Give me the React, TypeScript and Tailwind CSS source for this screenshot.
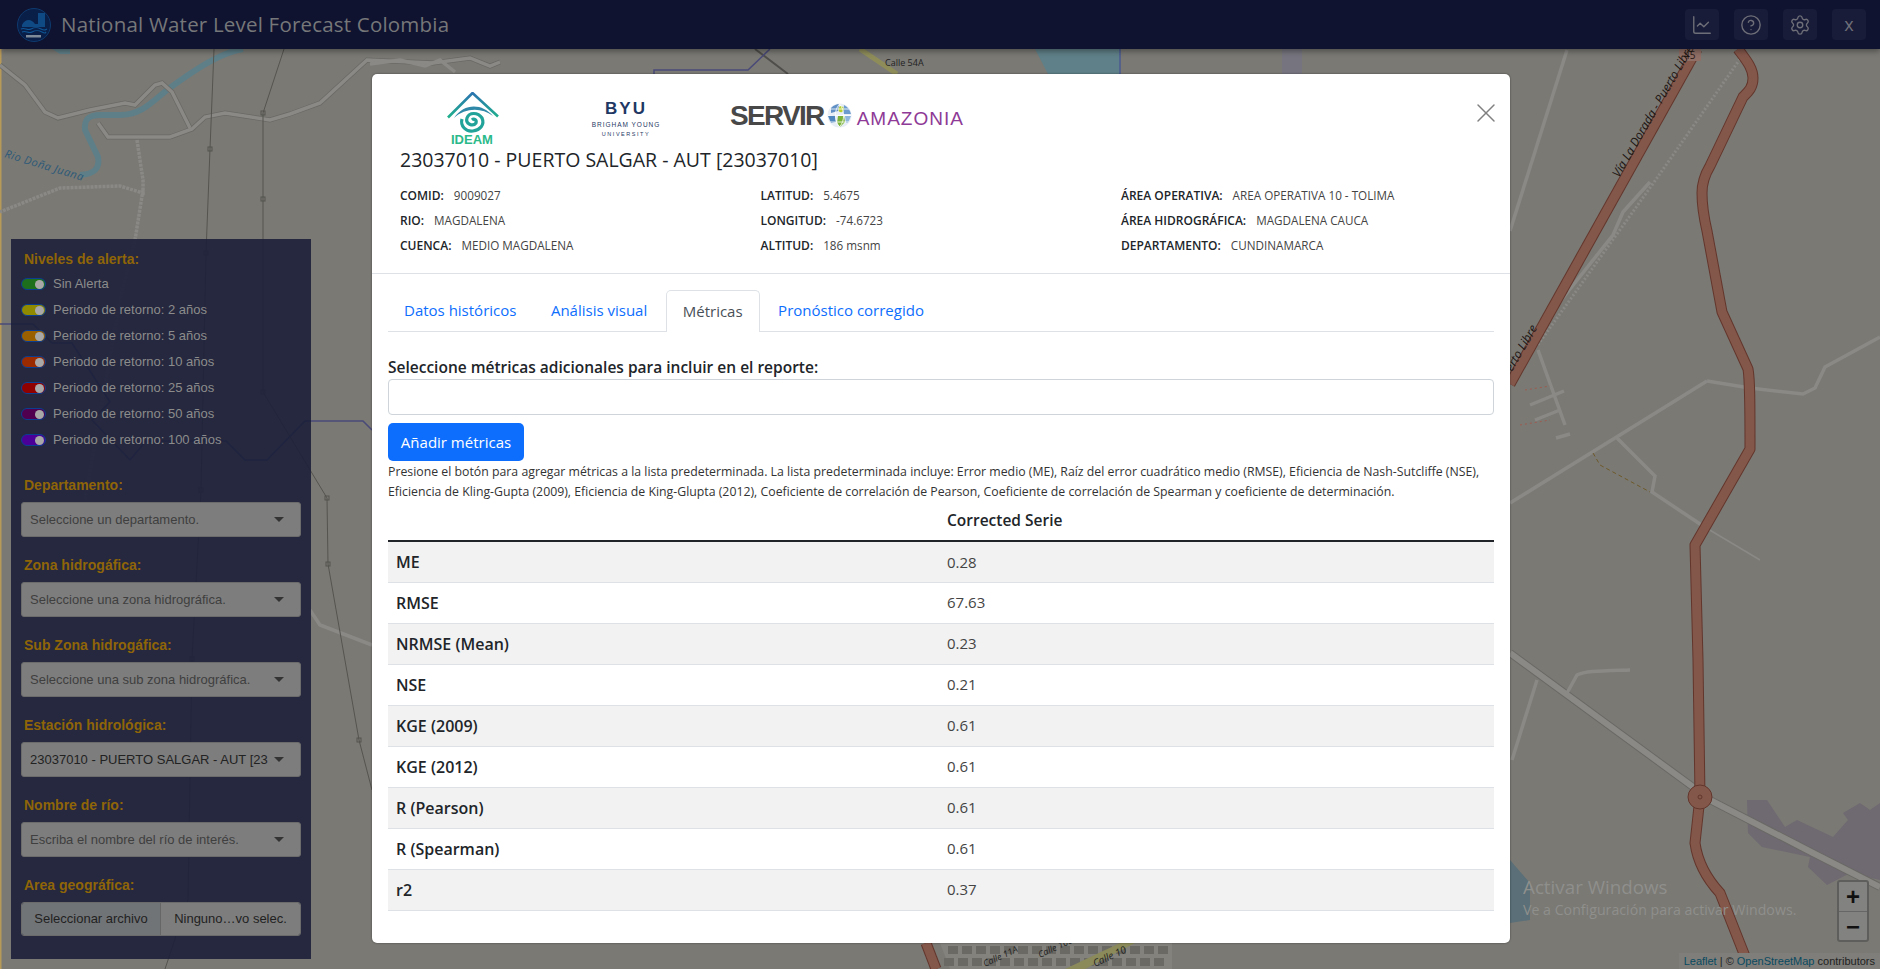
import React from "react";
import { LineChart, CircleHelp, Settings, X } from "lucide-react";

const SANS = "font-['Open_Sans',sans-serif]";
const ARIAL = "font-['Liberation_Sans',sans-serif]";

const levels = [
  { label: "Sin Alerta", color: "bg-[#1d6f1d]" },
  { label: "Periodo de retorno: 2 años", color: "bg-[#8f8a00]" },
  { label: "Periodo de retorno: 5 años", color: "bg-[#9a6000]" },
  { label: "Periodo de retorno: 10 años", color: "bg-[#9a2b00]" },
  { label: "Periodo de retorno: 25 años", color: "bg-[#8f0000]" },
  { label: "Periodo de retorno: 50 años", color: "bg-[#4f004f]" },
  { label: "Periodo de retorno: 100 años", color: "bg-[#4b0097]" },
];

const filters = [
  { label: "Departamento:", value: "Seleccione un departamento." },
  { label: "Zona hidrogáfica:", value: "Seleccione una zona hidrográfica." },
  { label: "Sub Zona hidrogáfica:", value: "Seleccione una sub zona hidrográfica." },
  { label: "Estación hidrológica:", value: "23037010 - PUERTO SALGAR - AUT [23", dark: true },
  { label: "Nombre de río:", value: "Escriba el nombre del río de interés." },
];

const info = [
  [
    ["COMID:", "9009027"],
    ["RIO:", "MAGDALENA"],
    ["CUENCA:", "MEDIO MAGDALENA"],
  ],
  [
    ["LATITUD:", "5.4675"],
    ["LONGITUD:", "-74.6723"],
    ["ALTITUD:", "186 msnm"],
  ],
  [
    ["ÁREA OPERATIVA:", "AREA OPERATIVA 10 - TOLIMA"],
    ["ÁREA HIDROGRÁFICA:", "MAGDALENA CAUCA"],
    ["DEPARTAMENTO:", "CUNDINAMARCA"],
  ],
];

const metrics = [
  ["ME", "0.28"],
  ["RMSE", "67.63"],
  ["NRMSE (Mean)", "0.23"],
  ["NSE", "0.21"],
  ["KGE (2009)", "0.61"],
  ["KGE (2012)", "0.61"],
  ["R (Pearson)", "0.61"],
  ["R (Spearman)", "0.61"],
  ["r2", "0.37"],
];

const nodes = [
  [210, 149], [263, 113], [263, 199], [206, 253], [201, 490], [263, 392], [327, 498], [328, 564], [192, 659], [359, 740],
];

// manzanas de la ciudad, abajo del modal
const blocks = Array.from({ length: 32 }, (_, i) => ({
  x: 948 + (i % 16) * 14 - (i > 15 ? 4 : 0),
  y: i > 15 ? 958 : 946,
}));

const highwayA = "M1738 49C1746 60 1753 68 1753 78C1753 88 1748 92 1743 97L1710 166C1704 176 1702 184 1702 193C1702 205 1704 218 1707 231L1722 312L1748 369C1750 380 1750 400 1750 449L1695 545C1696 580 1697 620 1698 660L1700 797L1695 843C1698 865 1708 880 1720 893L1750 969";

const MapLayer = () => (
  <svg className="absolute inset-0" width="1880" height="969" viewBox="0 0 1880 969" fill="none">
    <path d="M0 49H1.5V969H0Z" fill="#b89a58" />
    {/* agua */}
    <path d="M243 49C225 52 205 62 167 90C150 104 140 115 120 115H100C88 115 84 120 85 130L98 157C100 168 95 174 80 175" stroke="#5f7f88" strokeWidth="6" />
    <path d="M52 49H70V54H60Z" fill="#5f7f88" />
    <path d="M1035 49H1120V74H1048Z" fill="#5f8088" />
    <path d="M1120 49V74" stroke="#4a5a90" strokeWidth="1.5" />
    <path d="M1510 860L1530 883L1530 920L1510 923Z" fill="#5a6f78" />
    <path d="M1747 800H1767L1785 827L1797 820L1833 837L1848 820L1843 813L1860 803L1870 810L1880 803V880L1850 873L1827 885L1808 867L1810 857L1762 847L1748 833Z" fill="#6f6971" />
    <text x="0" y="0" fontSize="11" fontStyle="italic" fill="#2d5a78" fontFamily="Open Sans, sans-serif" transform="translate(4 157) rotate(17)" letterSpacing="0.5">Rio Doña Juana</text>
    {/* caminos */}
    <g stroke="#6a6965" strokeWidth="5">
      <path d="M0 65L25 85L45 112L58 118L90 110L125 103L135 105L155 85L162 83L172 92L190 128" />
      <path d="M98 123L108 137H170L192 129L205 117L225 113L270 120L290 114L320 103L367 60L433 63L470 58L490 66L500 62" />
      <path d="M1510 653L1693 787M1710 800L1813 853L1880 887" strokeWidth="8" />
    </g>
    <g stroke="#8a8986" strokeWidth="3.5">
      <path d="M0 65L25 85L45 112L58 118L90 110L125 103L135 105L155 85L162 83L172 92L190 128" />
      <path d="M98 123L108 137H170L192 129L205 117L225 113L270 120L290 114L320 103L367 60L433 63L470 58L490 66L500 62" />
      <path d="M370 64L400 60L425 66L440 60L455 72" />
      <path d="M1510 653L1693 787M1710 800L1813 853L1880 887" strokeWidth="6" />
      <path d="M1567 693L1577 675C1585 671 1600 671 1630 670" />
      <path d="M1537 680L1512 760" />
      <path d="M1707 381L1510 503" />
      <path d="M1707 381L1750 388L1803 394L1815 388L1825 367L1880 337" />
      <path d="M1617 438L1655 476L1652 492L1703 526" />
      <path d="M1703 526L1760 560" strokeWidth="1.5" />
      <path d="M1567 50L1510 231" />
      <path d="M1650 182L1623 212L1613 235L1543 323" />
      <path d="M1538 350L1565 425M1530 405L1564 391M1535 420L1560 410M1556 438L1570 434" />
      <path d="M310 610L320 625L372 645" />
      <path d="M137 140L143 180L143 193L120 186L60 188L0 212M143 190L135 240L120 300L85 500" strokeDasharray="3 1" />
      <path d="M1740 59L1657 178L1537 346" strokeDasharray="2 2" strokeWidth="3" />
    </g>
    <path d="M1593 453L1600 465L1650 492" stroke="#6e5a2a" strokeWidth="1" strokeDasharray="4 3" />
    <path d="M1525 390L1550 386M1520 425L1550 420" stroke="#9c5b50" strokeWidth="1" strokeDasharray="2 3" />
    {/* ferrocarril y camino norte */}
    <path d="M755 49L788 74" stroke="#4f4e4b" strokeWidth="2" />
    <path d="M654 74V70H748L770 49" stroke="#4a4a78" strokeWidth="1.5" />
    <path d="M860 49L897 74" stroke="#8e8d5a" strokeWidth="5" />
    <text x="885" y="66" fontSize="9" fill="#222" fontFamily="Open Sans, sans-serif">Calle 54A</text>
    <path d="M1282 49H1302V74H1282Z" fill="#76757f" />
    {/* lineas de alta tension */}
    <g stroke="#55544f" strokeWidth="1">
      <path d="M214 49L210 149L206 253L201 490L192 659L188 900L165 969" />
      <path d="M284 49L263 113V392L327 498L328 564L359 740L372 790" />
    </g>
    <g stroke="#55544f" fill="none">
      {nodes.map(([x, y]) => (
        <rect key={`${x}-${y}`} x={x - 2} y={y - 2} width="4" height="4" />
      ))}
    </g>
    <path d="M0 324H33L52 343H72L110 402L92 420L130 460L146 441H226L245 460H267L305 421H363L372 430" stroke="#4a4a78" strokeWidth="1.5" />
    {/* autopista */}
    <g stroke="#63362c" strokeWidth="11" strokeLinejoin="round">
      <path d={highwayA} />
      <path d="M1697 49L1510 384" />
      <path d="M926 943L936 969" />
    </g>
    <g stroke="#84574b" strokeWidth="9" strokeLinejoin="round">
      <path d={highwayA} />
      <path d="M1697 49L1510 384" />
      <path d="M926 943L936 969" />
    </g>
    <circle cx="1700" cy="797" r="12" fill="#84574b" stroke="#63362c" />
    <circle cx="1700" cy="797" r="2" stroke="#63362c" />
    <rect x="1679" y="49" width="22" height="12" rx="1" fill="#8f6f66" />
    <text x="1684" y="59" fontSize="10" fill="#2a1a16" fontFamily="Open Sans, sans-serif">45</text>
    <text fontSize="12" fontStyle="italic" fill="#1d1512" fontFamily="Open Sans, sans-serif" transform="translate(1619 178) rotate(-60)">Vía La Dorada - Puerto Libre</text>
    <text fontSize="12" fontStyle="italic" fill="#1d1512" fontFamily="Open Sans, sans-serif" transform="translate(1512 372) rotate(-60)">erto Libre</text>
    {/* ciudad */}
    <path d="M940 943H1172V969H950Z" fill="#83827d" />
    <g fill="#6a6964">
      {blocks.map((b) => (
        <rect key={`${b.x}-${b.y}`} x={b.x} y={b.y} width="10" height="8" />
      ))}
    </g>
    <path d="M1065 969L1120 943H1135L1085 969Z" fill="#8a8a5a" />
    <text fontSize="9" fontStyle="italic" fill="#222" fontFamily="Open Sans, sans-serif" transform="translate(985 967) rotate(-25)">Calle 11A</text>
    <text fontSize="9" fontStyle="italic" fill="#222" fontFamily="Open Sans, sans-serif" transform="translate(1040 958) rotate(-25)">Calle 108</text>
    <text fontSize="10" fontStyle="italic" fill="#222" fontFamily="Open Sans, sans-serif" transform="translate(1095 967) rotate(-25)">Calle 10</text>
  </svg>
);

const Globe = () => (
  <svg width="25" height="25" viewBox="0 0 25 25" fill="none">
    <circle cx="12.5" cy="12.5" r="12" fill="#e8eef5" />
    <path d="M4 5C7 2 10 1 12 1L11 8L4 10Z" fill="#5f8fc4" />
    <path d="M17 2C21 4 23 7 24 11L16 11Z" fill="#6c9ccf" />
    <path d="M1 13L8 12L9 19L4 20Z" fill="#4f86bd" />
    <path d="M13 3C17 3 18 7 15 9C12 10 10 7 13 3Z" fill="#b4cf2e" />
    <path d="M11 13H17L18 19L13 24L10 20Z" fill="#7bb33a" />
    <path d="M18 13H24L21 20L19 20Z" fill="#8fb6dc" />
    <path d="M1 12.5H24M12.5 1C7 7 7 18 12.5 24M12.5 1C18 7 18 18 12.5 24M3 6H22M3 19H22" stroke="#fff" strokeWidth="0.8" />
  </svg>
);

const Logos = () => (
  <div className="flex h-[59px] items-start">
    <svg width="52" height="54" viewBox="0 0 52 54" className="mt-[3px] ml-[47px]" fill="none">
      <defs>
        <linearGradient id="ideam" x1="0" y1="0" x2="0" y2="1">
          <stop offset="0" stopColor="#2b74b0" />
          <stop offset="1" stopColor="#1fb08c" />
        </linearGradient>
      </defs>
      <path d="M1 25.5L25.5 1L51 24.5" stroke="url(#ideam)" strokeWidth="2.6" />
      <path d="M7 26C17 11 35 11 46 24C34 15 18 16 7 26Z" fill="#2f88a8" />
      <path d="M15 27C13 34 19 40 26 39C33 38 38 33 35 26C31 20 22 20 20 26C18 32 26 35 29 31C30 28 27 26 25 28" stroke="#21a39a" strokeWidth="3.2" />
      <text x="4" y="52" fontSize="13" fontWeight="700" fill="#2bb98a" fontFamily="Liberation Sans, sans-serif">IDEAM</text>
    </svg>
    <div className={`mt-[10px] ml-[92px] flex w-[70px] flex-col items-center text-[#1f3864] ${ARIAL}`}>
      <span className="text-[17px] leading-[20px] font-bold tracking-[0.12em]">BYU</span>
      <span className="mt-[1px] text-[6.5px] leading-[10px] tracking-[0.15em] whitespace-nowrap">BRIGHAM YOUNG</span>
      <span className="text-[5.5px] leading-[9px] tracking-[0.28em]">UNIVERSITY</span>
    </div>
    <div className={`mt-[14px] ml-[69px] flex h-[25px] items-center ${ARIAL}`}>
      <span className="text-[28px] leading-[25px] font-bold tracking-[-0.06em] text-[#484848]">SERVIR</span>
      <span className="ml-[3px]"><Globe /></span>
      <span className="mt-[7px] ml-[5px] text-[19px] leading-[20px] tracking-[1px] text-[#8e3a96]">AMAZONIA</span>
    </div>
  </div>
);

const Modal = () => (
  <div className={`relative h-[869px] w-[1138px] rounded-[5px] bg-white text-[#212529] shadow-[0_0_2px_rgba(0,0,0,0.5)] ${SANS}`}>
    <div className="relative h-[200px] border-b border-[#dee2e6] pt-[15px] pl-[28px]">
      <Logos />
      <h5 className="text-[19.5px] leading-[24px] text-[#212529]">
        23037010 - PUERTO SALGAR - AUT [23037010]
      </h5>
      <button className="absolute top-[23px] right-[8px] text-[#808080]">
        <X size={32} strokeWidth={1.1} />
      </button>
      <div className="mt-[11px] flex">
        {info.map((col, i) => (
          <div key={i} className="w-[360.5px]">
            {col.map(([k, v]) => (
              <div key={k} className="flex h-[25px] items-center gap-[10px] text-[11.7px] whitespace-nowrap">
                <b className="text-[12px] font-semibold">{k}</b>
                <span className="text-[#444]">{v}</span>
              </div>
            ))}
          </div>
        ))}
      </div>
    </div>
    <div className="px-[16px] pt-[16px]">
      <div className="flex h-[42px] gap-[2.5px] border-b border-[#dee2e6] text-[15px] text-[#0d6efd]">
        <a className="px-[16px] pt-[9px]">Datos históricos</a>
        <a className="px-[16px] pt-[9px]">Análisis visual</a>
        <a className="h-[42px] rounded-t-[5px] border border-b-0 border-[#dee2e6] bg-white px-[16px] pt-[9px] text-[#495057]">Métricas</a>
        <a className="px-[16px] pt-[9px]">Pronóstico corregido</a>
      </div>
      <p className="mt-[25px] text-[15.5px] leading-[20px] font-semibold text-[#212529]">
        Seleccione métricas adicionales para incluir en el reporte:
      </p>
      <div className="mt-[2px] h-[36px] rounded-[4px] border border-[#ced4da]" />
      <button className="mt-[8px] h-[38px] w-[136px] rounded-[5px] bg-[#0d6efd] text-[15px] font-medium text-white">
        Añadir métricas
      </button>
      <p className="mt-[1px] text-[12.3px] leading-[20px] text-[#333]">
        Presione el botón para agregar métricas a la lista predeterminada. La lista predeterminada incluye: Error medio (ME), Raíz del error cuadrático medio (RMSE), Eficiencia de Nash-Sutcliffe (NSE), Eficiencia de Kling-Gupta (2009), Eficiencia de King-Glupta (2012), Coeficiente de correlación de Pearson, Coeficiente de correlación de Spearman y coeficiente de determinación.
      </p>
      <table className="w-full border-collapse text-[15px]">
        <thead>
          <tr className="h-[39px] border-b-2 border-[#212529]">
            <th className="w-[559px]" />
            <th className="text-left text-[15.5px] font-semibold">Corrected Serie</th>
          </tr>
        </thead>
        <tbody>
          {metrics.map(([name, value], i) => (
            <tr key={name} className={`h-[41px] border-b border-[#dee2e6] ${i % 2 === 0 ? "bg-[#f2f2f2]" : "bg-white"}`}>
              <td className="pl-[8px] text-[16px] font-semibold">{name}</td>
              <td className="text-[#444]">{value}</td>
            </tr>
          ))}
        </tbody>
      </table>
    </div>
  </div>
);

const Sidebar = () => (
  <div className={`absolute top-[239px] left-[11px] h-[720px] w-[300px] bg-[#1c1f39]/90 pt-[9px] pl-[10px] ${ARIAL}`}>
    <p className="pl-[3px] text-[14px] leading-[22px] font-bold text-[#8f6508]">Niveles de alerta:</p>
    <div className="mt-[1px]">
      {levels.map((l) => (
        <div key={l.label} className="flex h-[26px] items-center gap-[7px] text-[13px] text-[#8c8c8c]">
          <span className={`flex h-[12px] w-[25px] items-center justify-end rounded-full border border-[#0b3d91] pr-[1px] ${l.color}`}>
            <span className="h-[9px] w-[9px] rounded-full bg-[#a8a8a8]" />
          </span>
          {l.label}
        </div>
      ))}
    </div>
    <div className="mt-[21px] flex flex-col gap-[17px]">
      {filters.map((f) => (
        <div key={f.label}>
          <p className="pl-[3px] text-[14px] leading-[22px] font-bold whitespace-nowrap text-[#8f6508]">{f.label}</p>
          <div className={`mt-[6px] flex h-[35px] w-[280px] items-center justify-between rounded-[3px] border border-[#6b6b6b] bg-[#7d7d7d] pr-[16px] pl-[8px] text-[13px] whitespace-nowrap ${f.dark ? "text-[#222]" : "text-[#3f3f3f]"}`}>
            {f.value}
            <span className="h-0 w-0 border-x-[5px] border-t-[5px] border-x-transparent border-t-[#333]" />
          </div>
        </div>
      ))}
      <div>
        <p className="pl-[3px] text-[14px] leading-[22px] font-bold text-[#8f6508]">Area geográfica:</p>
        <div className="mt-[6px] flex h-[34px] w-[280px] overflow-hidden rounded-[3px] border border-[#6b6b6b] text-[13px] text-[#222]">
          <span className="flex w-[139px] items-center justify-center border-r border-[#666] bg-[#717477]">Seleccionar archivo</span>
          <span className="flex flex-1 items-center justify-center bg-[#7d7d7d] whitespace-nowrap">Ninguno…vo selec.</span>
        </div>
      </div>
    </div>
  </div>
);

const iconBox = "flex h-[31px] w-[34px] items-center justify-center rounded-[4px] bg-[#181c38]";

const Header = () => (
  <header className="relative flex h-[49px] items-center justify-between bg-[#0f1330] pr-[14px] pl-[17px] shadow-[0_2px_6px_rgba(0,0,0,0.4)]">
    <div className="flex items-center gap-[10px]">
      <svg width="34" height="34" viewBox="0 0 34 34" fill="none">
        <circle cx="17" cy="17" r="16.5" fill="#0a1f48" stroke="#0e3a6e" />
        <rect x="21" y="5" width="7" height="11" fill="#0f4a85" />
        <path d="M5 17C8 11 14 10 18 16H28V19H5Z" fill="#0f4a85" />
        <path d="M4 21C8 19 10 23 14 21S20 19 24 21 28 22 30 21M5 24C9 22 11 26 15 24S21 22 25 24 28 25 29 24" stroke="#0f5595" strokeWidth="1.2" />
        <rect x="9" y="27" width="15" height="2.5" fill="#7d8a9a" />
      </svg>
      <span className={`text-[20.5px] tracking-[0.2px] text-[#767779] ${SANS}`}>National Water Level Forecast Colombia</span>
    </div>
    <div className="flex items-center gap-[15px] text-[#6e6e78]">
      <span className={iconBox}><LineChart size={22} strokeWidth={1.5} /></span>
      <span className={iconBox}><CircleHelp size={22} strokeWidth={1.5} /></span>
      <span className={iconBox}><Settings size={22} strokeWidth={1.5} /></span>
      <span className={`${iconBox} text-[18px] ${SANS}`}>x</span>
    </div>
  </header>
);

const MapControls = () => (
  <>
    <div className={`absolute top-[880px] left-[1837px] flex h-[62px] w-[32px] flex-col rounded-[3px] border-2 border-[#5e5e5c] bg-[#828281] text-[24px] leading-[29px] font-bold text-[#111] ${ARIAL}`}>
      <span className="h-[30px] border-b border-[#666] text-center">+</span>
      <span className="text-center">−</span>
    </div>
    <div className={`absolute right-0 bottom-0 bg-[#7f7e7a] px-[5px] text-[11px] leading-[16px] text-[#222] ${ARIAL}`}>
      <span className="text-[#0a4a60]">Leaflet</span> | © <span className="text-[#0a4a60]">OpenStreetMap</span> contributors
    </div>
    <div className={`absolute top-[874px] left-[1523px] text-[#8f8f8c] ${SANS}`}>
      <p className="text-[18.8px] leading-[26px]">Activar Windows</p>
      <p className="text-[14.2px] leading-[20px]">Ve a Configuración para activar Windows.</p>
    </div>
  </>
);

export default function App() {
  return (
    <div className="relative h-[969px] w-[1880px] overflow-hidden bg-[#7a7974]">
      <MapLayer />
      <Header />
      <Sidebar />
      <MapControls />
      <div className="absolute inset-0 flex justify-center pt-[74px] pl-[2px]">
        <Modal />
      </div>
    </div>
  );
}
